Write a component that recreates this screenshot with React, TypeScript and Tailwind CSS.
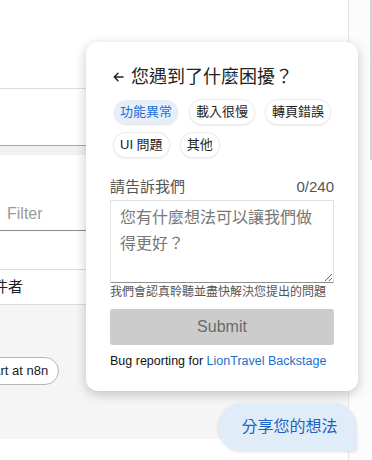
import React, { useState } from 'react';

const FONT = { fontFamily: '"Liberation Sans", "Noto Sans CJK TC", sans-serif' };

const categories = ['功能異常', '載入很慢', '轉頁錯誤', 'UI 問題', '其他'];

const ArrowLeft = () => (
    <svg width="11" height="10" viewBox="0 0 11 10" fill="none" stroke="#222" strokeWidth="1.5" strokeLinecap="round" strokeLinejoin="round">
        <path d="M10 5H1.5M5 1.3L1.3 5L5 8.7" />
    </svg>
);

const Background: React.FC = () => (
    <div className="flex h-[460px] w-[372px] overflow-hidden bg-white">
        <div className="flex w-[348px] flex-col">
            <div className="h-[89px] border-b border-[#dcdcdc]" />
            <div className="h-[57px] border-b border-[#a8a8a8]" />
            <div className="h-[9px] bg-[#f1f1f1]" />
            <div className="flex h-[76px] flex-col justify-end border-b border-[#8a8a8a]">
                <span className="mb-[4px] ml-[7px] text-[16px] text-[#9a9a9a]">Filter</span>
            </div>
            <div className="h-[39px] border-b border-[#dcdcdc]" />
            <div className="flex h-[35px] items-center border-b border-[#dcdcdc]">
                <span className="ml-[-7px] text-[15px] text-[#222]">件者</span>
            </div>
            <div className="flex h-[134px] items-start bg-[#f5f5f5] pt-[52px]">
                <span className="ml-[-30px] rounded-full border border-[#b5b5b5] bg-white px-[10px] py-[3px] text-[13px] text-[#222]">Start at n8n</span>
            </div>
            <div className="flex-1 bg-white" />
        </div>
        <div className="relative w-[24px] border-l border-[#e6e6e6] bg-[#fcfcfc]">
            <div className="absolute right-0 top-0 h-[160px] w-[2px] bg-[#d4d4d4]" />
        </div>
    </div>
);

export default function App() {
    const [selected, setSelected] = useState('功能異常');
    const [text, setText] = useState('');

    return (
        <div className="relative h-[460px] w-[372px] overflow-hidden" style={FONT}>
            <Background />

            {/* feedback popup */}
            <div className="absolute left-[86px] top-[42px] w-[272px] rounded-[12px] bg-white px-[24px] pb-[21px] pt-[23px] shadow-[0_3px_12px_rgba(0,0,0,0.22)]">
                <div className="flex h-[24px] items-center pl-[3px] text-[18px] text-[#222]">
                    <span className="mr-[7px]"><ArrowLeft /></span>
                    <span>您遇到了什麼困擾？</span>
                </div>

                <div className="mt-[11px] flex flex-wrap gap-x-[12px] gap-y-[9px] pl-[4px]">
                    {categories.map((c) => (
                        <button
                            key={c}
                            onClick={() => setSelected(c)}
                            className={`flex h-[24px] items-center rounded-full px-[6px] text-[13px] ${
                                selected === c
                                    ? 'bg-[#e6eef9] text-[#1a6fd6] shadow-[0_1px_2px_rgba(0,0,0,0.12)]'
                                    : 'bg-white text-[#222] shadow-[0_0_0_1px_#ededed,0_1px_3px_rgba(0,0,0,0.16)]'
                            }`}
                        >
                            {c}
                        </button>
                    ))}
                </div>

                <div className="mt-[20px] flex h-[20px] items-center justify-between text-[15px] text-[#555]">
                    <span>請告訴我們</span>
                    <span>{text.length}/240</span>
                </div>
                <textarea
                    value={text}
                    onChange={(e) => setText(e.target.value.slice(0, 240))}
                    placeholder="您有什麼想法可以讓我們做得更好？"
                    className="mt-[3px] block h-[83px] w-full border border-[#e2e2e2] border-b-[#8f8f8f] px-[9px] pt-[4px] text-[16px] leading-[26px] text-[#222] outline-none placeholder:text-[#777]"
                    style={FONT}
                />
                <div className="mt-[1px] text-[12px] leading-[16px] text-[#555]">我們會認真聆聽並盡快解決您提出的問題</div>

                <button
                    disabled={!text.trim()}
                    className="mt-[9px] h-[36px] w-full rounded-[3px] bg-[#cccccc] text-[16px] text-[#6b6b6b]"
                >
                    Submit
                </button>

                <div className="mt-[7px] whitespace-nowrap text-[12.5px] leading-[18px] text-[#111]">
                    Bug reporting for <span className="text-[#1a6fd0]">LionTravel Backstage</span>
                </div>
            </div>

            {/* floating trigger */}
            <button className="absolute left-[218px] top-[403px] flex h-[48px] w-[139px] items-center justify-center rounded-l-[24px] rounded-tr-[24px] rounded-br-[3px] bg-[#e1ecf9] pl-[4px] text-[16px] text-[#1a62c4] shadow-[0_1px_3px_rgba(0,0,0,0.12)]">
                分享您的想法
            </button>
        </div>
    );
}
